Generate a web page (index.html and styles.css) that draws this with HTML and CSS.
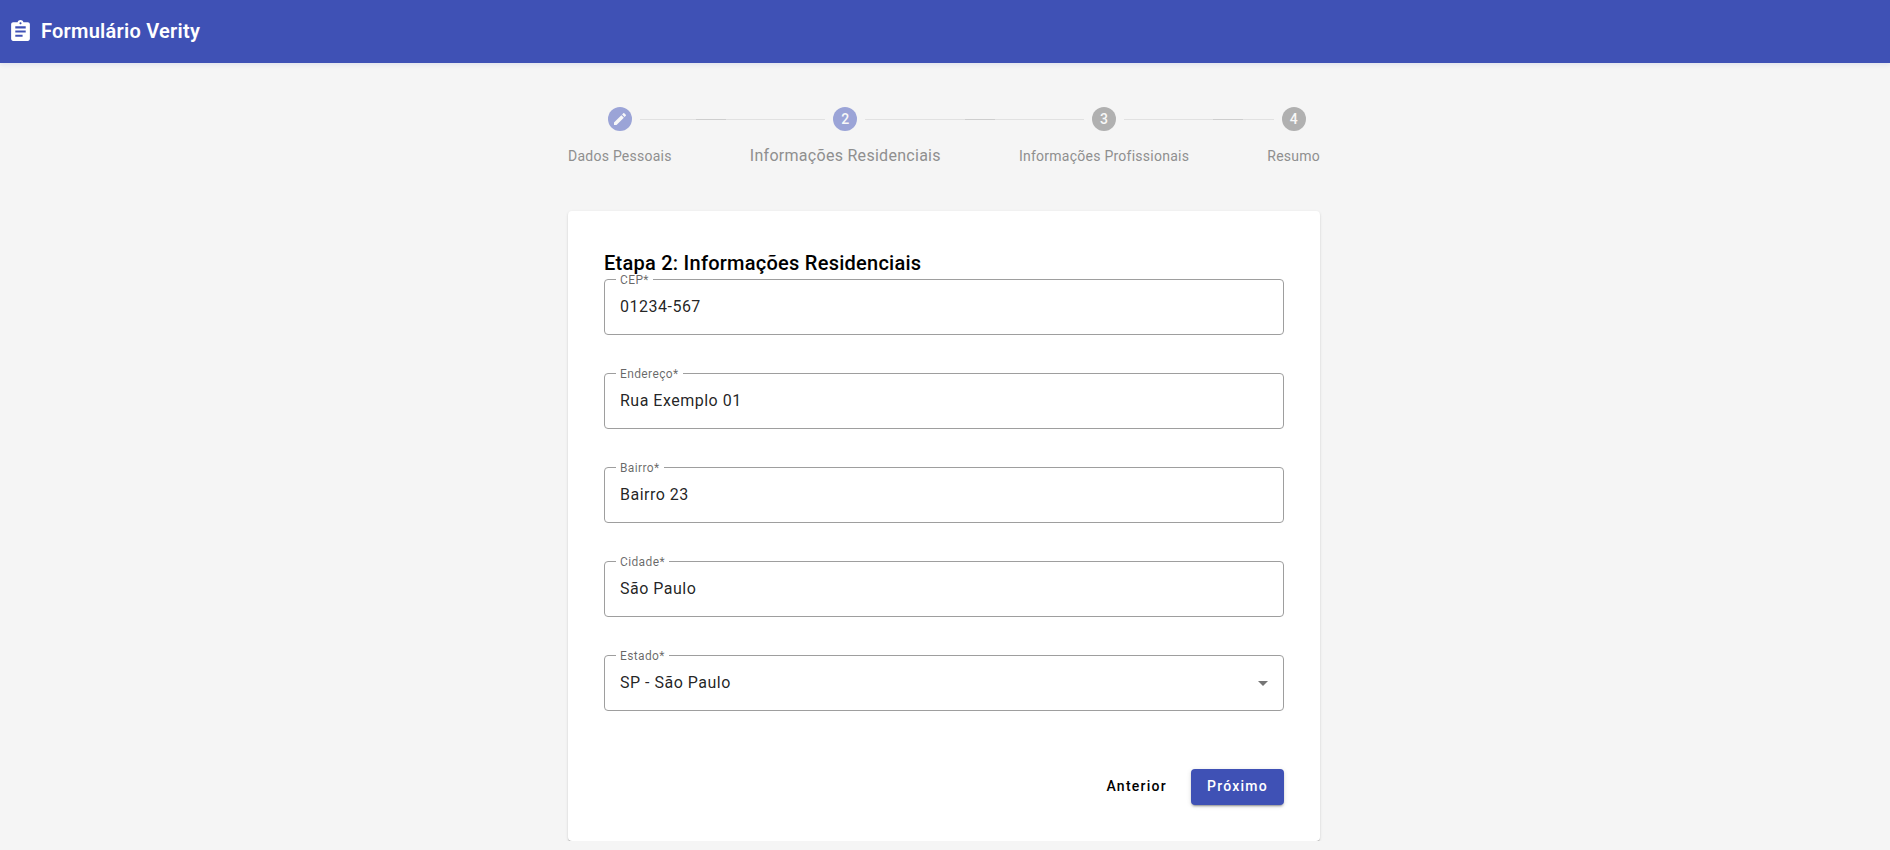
FILE: index.html
```html
<!DOCTYPE html>
<html lang="pt-BR">
<head>
<meta charset="utf-8">
<meta name="viewport" content="width=device-width, initial-scale=1">
<title>Formulário Verity</title>
<link rel="stylesheet" href="styles.css">
</head>
<body>
<header class="toolbar">
  <svg class="toolbar-icon" viewBox="0 0 24 24" aria-hidden="true"><path d="M19 3h-4.180C14.400 1.840 13.300 1 12 1s-2.400.840-2.820 2H5c-1.100 0-2 .9-2 2v14c0 1.100.9 2 2 2h14c1.100 0 2-.9 2-2V5c0-1.100-.9-2-2-2zm-7 0c.550 0 1 .450 1 1s-.450 1-1 1-1-.450-1-1 .450-1 1-1zm2 14H7v-2h7v2zm3-4H7v-2h10v2zm0-4H7V7h10v2z"/></svg>
  <h1 class="toolbar-title">Formulário Verity</h1>
</header>
<main class="page">
  <ol class="stepper">
    <li class="step step-done">
      <span class="step-track"><span class="step-badge"><svg class="step-icon" viewBox="0 0 24 24" aria-hidden="true"><path d="M3 17.250V21h3.750L17.810 9.940l-3.750-3.750L3 17.250zM20.710 7.040c.390-.390.390-1.020 0-1.410l-2.340-2.340c-.390-.390-1.020-.390-1.410 0l-1.830 1.830 3.750 3.750 1.830-1.830z"/></svg></span></span>
      <span class="step-label">Dados Pessoais</span>
    </li>
    <li class="connector" aria-hidden="true"></li>
    <li class="step step-current" aria-current="step">
      <span class="step-track"><span class="step-badge">2</span></span>
      <span class="step-label">Informações Residenciais</span>
    </li>
    <li class="connector" aria-hidden="true"></li>
    <li class="step">
      <span class="step-track"><span class="step-badge">3</span></span>
      <span class="step-label">Informações Profissionais</span>
    </li>
    <li class="connector" aria-hidden="true"></li>
    <li class="step">
      <span class="step-track"><span class="step-badge">4</span></span>
      <span class="step-label">Resumo</span>
    </li>
  </ol>
  <form class="card">
    <h2 class="card-title">Etapa 2: Informações Residenciais</h2>
    <div class="fields">
      <div class="field">
        <label class="field-label" for="cep">CEP*</label>
        <input class="field-control" id="cep" type="text" value="01234-567">
      </div>
      <div class="field">
        <label class="field-label" for="endereco">Endereço*</label>
        <input class="field-control" id="endereco" type="text" value="Rua Exemplo 01">
      </div>
      <div class="field">
        <label class="field-label" for="bairro">Bairro*</label>
        <input class="field-control" id="bairro" type="text" value="Bairro 23">
      </div>
      <div class="field">
        <label class="field-label" for="cidade">Cidade*</label>
        <input class="field-control" id="cidade" type="text" value="São Paulo">
      </div>
      <div class="field">
        <label class="field-label" for="estado">Estado*</label>
        <select class="field-control" id="estado"><option>SP - São Paulo</option></select>
        <svg class="field-arrow" viewBox="0 0 10 5" aria-hidden="true"><path d="M0 0h10L5 5z"/></svg>
      </div>
    </div>
    <div class="actions">
      <button class="button" type="button">Anterior</button>
      <button class="button button-primary" type="submit">Próximo</button>
    </div>
  </form>
</main>
</body>
</html>
```

FILE: styles.css
```css
* {
  box-sizing: border-box;
}

body {
  margin: 0;
  background: #f5f5f5;
  color: rgba(0, 0, 0, 0.87);
  font-family: Roboto, "Liberation Sans", sans-serif;
}

.toolbar {
  display: flex;
  align-items: center;
  gap: 8px;
  height: 63px;
  padding: 0 8px;
  background: #3f51b5;
  color: #fff;
  box-shadow: 0 2px 4px rgba(63, 81, 181, 0.1);
}

.toolbar-icon {
  width: 25px;
  height: 25px;
  fill: currentColor;
}

.toolbar-title {
  margin: 0;
  padding-bottom: 2px;
  font-size: 20px;
  line-height: 32px;
  font-weight: 600;
  letter-spacing: 0.0125em;
}

.page {
  max-width: 802px;
  margin: 0 auto;
  padding: 20px 2px 0 0;
}

.stepper {
  display: flex;
  margin: 0;
  padding: 0;
  list-style: none;
}

.step {
  display: flex;
  flex-direction: column;
  align-items: center;
  padding: 24px 0;
  color: #8f8f8f;
}

.step-track {
  display: flex;
  align-items: center;
  gap: 8px;
  width: 100%;
}

.step-track::before,
.step-track::after {
  content: "";
  flex: 1;
  height: 1px;
  background: #e1e1e1;
}

.step:first-child .step-track::before,
.step:last-child .step-track::after {
  background: none;
}

.step-badge {
  display: flex;
  align-items: center;
  justify-content: center;
  width: 24px;
  height: 24px;
  border-radius: 50%;
  background: #b0b0b0;
  color: #f8f8f8;
  font-size: 14px;
  line-height: 22px;
  font-weight: 500;
}

.step-done .step-badge,
.step-current .step-badge {
  background: #9ba4d7;
}

.step-icon {
  width: 16px;
  height: 16px;
  fill: currentColor;
}

.step-label {
  padding: 15px 24px 1px;
  font-size: 14px;
  line-height: 20px;
  letter-spacing: 0.0178em;
  white-space: nowrap;
}

.step-current .step-label {
  font-size: 16px;
}

.connector {
  flex: 1;
  height: 1px;
  margin-top: 36px;
  background: #cecece;
}

.card {
  margin: 20px 24px 0;
  padding: 36px;
  border-radius: 4px;
  background: #fff;
  box-shadow: 0 2px 1px -1px rgba(0, 0, 0, 0.2), 0 1px 1px rgba(0, 0, 0, 0.14), 0 1px 3px rgba(0, 0, 0, 0.12);
}

.card-title {
  position: relative;
  z-index: 1;
  margin: 0;
  color: #000;
  font-size: 20px;
  line-height: 32px;
  font-weight: 500;
  letter-spacing: 0.0125em;
}

.fields {
  display: grid;
  gap: 38px;
}

.field {
  position: relative;
}

.field-label {
  position: absolute;
  top: -6px;
  left: 12px;
  padding: 0 4px;
  background: #fff;
  color: rgba(0, 0, 0, 0.6);
  font-size: 12px;
  line-height: 14px;
  letter-spacing: 0.03125em;
}

.field-control {
  display: block;
  width: 100%;
  height: 56px;
  margin: 0;
  padding: 0 15px 2px;
  border: 1px solid #9e9e9e;
  border-radius: 4px;
  background: #fff;
  color: inherit;
  font-family: inherit;
  font-size: 16px;
  letter-spacing: 0.03125em;
  appearance: none;
}

.field-arrow {
  position: absolute;
  top: 26px;
  right: 16px;
  width: 10px;
  height: 5px;
  fill: #757575;
  pointer-events: none;
}

.actions {
  display: flex;
  justify-content: flex-end;
  gap: 16px;
  padding-top: 58px;
}

.button {
  height: 36px;
  padding: 0 8px 2px;
  border: 0;
  border-radius: 4px;
  background: transparent;
  color: #000;
  font-family: inherit;
  font-size: 14px;
  font-weight: 500;
  letter-spacing: 0.0893em;
}

.button-primary {
  padding: 0 16px 2px;
  background: #3f51b5;
  color: #fff;
  box-shadow: 0 3px 1px -2px rgba(0, 0, 0, 0.2), 0 2px 2px rgba(0, 0, 0, 0.14), 0 1px 5px rgba(0, 0, 0, 0.12);
}
```
